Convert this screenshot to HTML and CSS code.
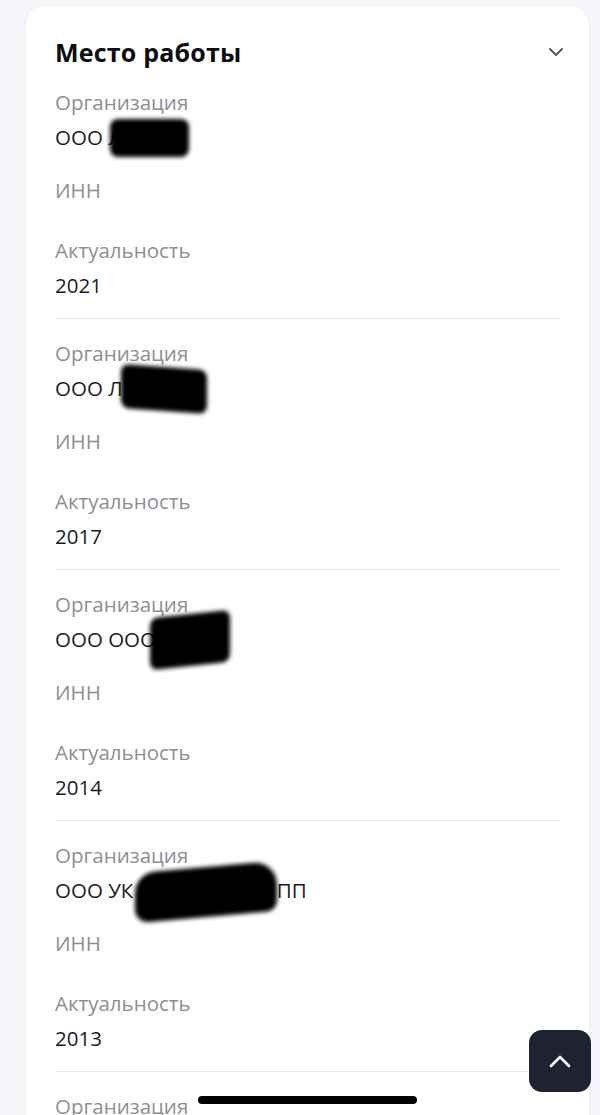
FILE: index.html
```html
<!DOCTYPE html>
<html lang="ru">
    <head>
        <meta charset="utf-8">
        <meta name="viewport" content="width=device-width, initial-scale=1.0">
        <title>Место работы</title>
        <link rel="stylesheet" href="styles.css">
    </head>
    <body>
        <div class="page">
            <div class="card">
                <div class="card-head">
                    <h2 class="card-title">Место работы</h2>
                    <svg class="chevron" width="16" height="10" viewBox="0 0 16 10">
                        <path d="M2 2 L8 8 L14 2" fill="none" stroke="#555a66" stroke-width="2" stroke-linecap="round" stroke-linejoin="round"/>
                    </svg>
                </div>

                <div class="job">
                    <div class="field">
                        <div class="field-label">Организация</div>
                        <div class="field-value">ООО Л<span class="redact redact-1"></span></div>
                    </div>
                    <div class="field">
                        <div class="field-label">ИНН</div>
                        <div class="field-value"></div>
                    </div>
                    <div class="field">
                        <div class="field-label">Актуальность</div>
                        <div class="field-value">2021</div>
                    </div>
                </div>

                <div class="job">
                    <div class="field">
                        <div class="field-label">Организация</div>
                        <div class="field-value">ООО Л<span class="redact redact-2"></span></div>
                    </div>
                    <div class="field">
                        <div class="field-label">ИНН</div>
                        <div class="field-value"></div>
                    </div>
                    <div class="field">
                        <div class="field-label">Актуальность</div>
                        <div class="field-value">2017</div>
                    </div>
                </div>

                <div class="job">
                    <div class="field">
                        <div class="field-label">Организация</div>
                        <div class="field-value">ООО ООО<span class="redact redact-3"></span></div>
                    </div>
                    <div class="field">
                        <div class="field-label">ИНН</div>
                        <div class="field-value"></div>
                    </div>
                    <div class="field">
                        <div class="field-label">Актуальность</div>
                        <div class="field-value">2014</div>
                    </div>
                </div>

                <div class="job">
                    <div class="field">
                        <div class="field-label">Организация</div>
                        <div class="field-value">ООО УК<span class="hidden-part">ООООООООО</span>ПП<span class="redact redact-4"></span></div>
                    </div>
                    <div class="field">
                        <div class="field-label">ИНН</div>
                        <div class="field-value"></div>
                    </div>
                    <div class="field">
                        <div class="field-label">Актуальность</div>
                        <div class="field-value">2013</div>
                    </div>
                </div>

                <div class="job">
                    <div class="field">
                        <div class="field-label">Организация</div>
                    </div>
                </div>
            </div>
        </div>

        <button class="to-top" type="button">
            <svg width="24" height="14" viewBox="0 0 24 14">
                <path d="M3 12 L12 3 L21 12" fill="none" stroke="#ffffff" stroke-width="2.6" stroke-linecap="round" stroke-linejoin="round"/>
            </svg>
        </button>
        <div class="home-bar"></div>
    </body>
</html>
```

FILE: styles.css
```css
html, body {
    margin: 0;
    padding: 0;
}
body {
    background-color: #f5f6fa;
    font-family: "Open Sans", "Noto Sans", sans-serif;
    color: #1b1b1f;
    overflow: hidden;
    height: 1115px;
}
.page {
    padding: 5px 10px 0 25px;
}
.card {
    background-color: #ffffff;
    border: 1px solid #eceef3;
    border-radius: 20px 20px 0 0;
    padding: 30px 29px 0 29px;
    min-height: 1200px;
}
.card-head {
    display: flex;
    align-items: center;
    justify-content: space-between;
    height: 32px;
}
.card-title {
    margin: 0;
    font-size: 25px;
    font-weight: 700;
    color: #0c0c0f;
    letter-spacing: 0.2px;
}
.chevron {
    margin-right: -4px;
}
.job {
    padding: 22px 0 19px 0;
    border-bottom: 1px solid #e8e9ee;
}
.field + .field {
    margin-top: 27px;
}
.field-label {
    font-size: 20.5px;
    line-height: 24px;
    color: #8d8e94;
}
.field-value {
    position: relative;
    padding-top: 9px;
    font-size: 20.5px;
    line-height: 28px;
    color: #1b1b1f;
}
.field-value:empty {
    height: 0;
}
.hidden-part {
    color: transparent;
}
.redact {
    position: absolute;
    background-color: #000000;
    filter: blur(2px);
    border-radius: 8px;
}
.redact-1 {
    left: 55px;
    top: 5px;
    width: 79px;
    height: 38px;
}
.redact-2 {
    left: 66px;
    top: 2px;
    width: 86px;
    height: 44px;
    transform: skewY(4deg);
}
.redact-3 {
    left: 95px;
    top: -2px;
    width: 80px;
    height: 52px;
    transform: skewY(-6deg);
}
.redact-4 {
    left: 80px;
    top: 0;
    width: 142px;
    height: 50px;
    border-radius: 20px 24px 10px 14px;
    transform: skewY(-5deg);
}
.to-top {
    position: fixed;
    left: 529px;
    top: 1030px;
    width: 62px;
    height: 62px;
    border: none;
    border-radius: 13px;
    background-color: #1f2230;
    display: flex;
    align-items: center;
    justify-content: center;
    padding: 0;
}
.home-bar {
    position: fixed;
    left: 198px;
    top: 1096px;
    width: 219px;
    height: 8px;
    border-radius: 4px;
    background-color: #000000;
}
```
